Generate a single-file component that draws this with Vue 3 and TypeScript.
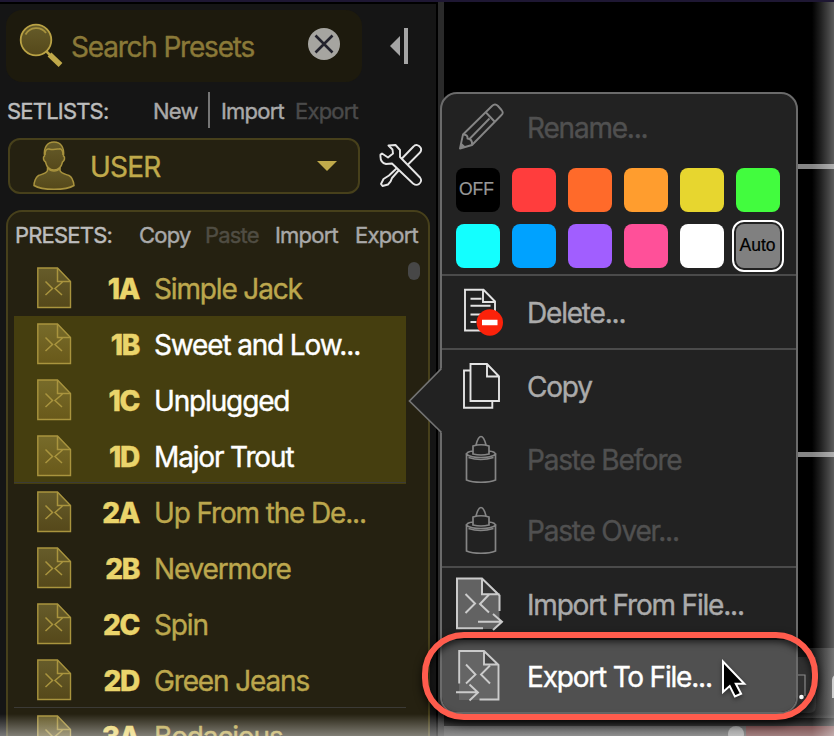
<script setup lang="ts">
interface Preset {
  slot: string
  name: string
  selected?: boolean
  lastInBank?: boolean
}

const presets: Preset[] = [
  { slot: '1A', name: 'Simple Jack' },
  { slot: '1B', name: 'Sweet and Low...', selected: true },
  { slot: '1C', name: 'Unplugged', selected: true },
  { slot: '1D', name: 'Major Trout', selected: true, lastInBank: true },
  { slot: '2A', name: 'Up From the De...' },
  { slot: '2B', name: 'Nevermore' },
  { slot: '2C', name: 'Spin' },
  { slot: '2D', name: 'Green Jeans', lastInBank: true },
  { slot: '3A', name: 'Bodacious' },
]

const swatches: string[] = [
  'off', 'red', 'vermilion', 'orange', 'yellow', 'green',
  'cyan', 'blue', 'purple', 'pink', 'white', 'auto',
]
const swatchLabels: Record<string, string> = { off: 'OFF', auto: 'Auto' }
</script>

<template>
  <div class="screen">
    <aside class="sidebar">
      <div class="search-row">
        <div class="search">
          <svg class="magnifier" width="48" height="48" viewBox="0 0 48 48">
            <defs>
              <linearGradient id="lens" x1="0" y1="0" x2="0" y2="1">
                <stop offset="0" stop-color="#665c2a" /><stop offset="1" stop-color="#55481a" />
              </linearGradient>
              <linearGradient id="lens-lit" x1="0" y1="0" x2="0" y2="1">
                <stop offset="0" stop-color="#776b2a" /><stop offset="1" stop-color="#69591a" />
              </linearGradient>
            </defs>
            <circle cx="18" cy="18" r="15.3" fill="url(#lens)" stroke="#b9a245" stroke-width="1.8" />
            <path d="M7.5 12.5C12 4.5 23 4 28 11" fill="none" stroke="#a8933e" stroke-width="1.8" />
            <path d="M28.5 29.500l4 4" stroke="#b9a245" stroke-width="2.500" />
            <path d="M31.500 32.500l11 10.500" stroke="#c0a94a" stroke-width="5.500" />
          </svg>
          <span class="search-text">Search Presets</span>
          <svg class="clear" width="32" height="32" viewBox="0 0 32 32">
            <circle cx="16" cy="16" r="16" fill="#a6a5a0" />
            <path d="M7.500 7.500l17 17M24.500 7.500l-17 17" stroke="#22222c" stroke-width="2.600" />
          </svg>
        </div>
        <svg class="collapse" width="18" height="36" viewBox="0 0 18 36">
          <path d="M10 8v20L0 18z" fill="#a5a5a5" /><path d="M14 0h4v36h-4z" fill="#a5a5a5" />
        </svg>
      </div>

      <div class="setlists">
        <span class="heading">SETLISTS:</span>
        <span class="new">New</span>
        <i class="bar"></i>
        <span class="import">Import</span>
        <span class="dim">Export</span>
      </div>

      <div class="user-row">
        <div class="select">
          <svg class="user-icon" width="42" height="50" viewBox="0 0 42 50">
            <g fill="url(#lens)" stroke="#a8923d" stroke-width="1.500">
              <path d="M14.500 24.500v5c-1 3-5 3.500-9 5-3 1.800-4.500 7-4.500 10 8 5 32 5 40 0-.5-4-2-8.500-5-10-4-1.500-8-2-9-5v-5z" />
              <path d="M11.500 15c-2 1-1 5 1 6 1 5 4.500 8 8.500 8s7.500-3 8.500-8c2-1 3-5 1-6 1-9-3-14-9.500-14S10.500 6 11.500 15z" />
              <path d="M12 14c0-4 1-6.500 4-6 5 1.500 8 0 11-.3 2 .5 3 3 3 6.300M15 27c3 4 9 4 12 0" fill="none" />
            </g>
          </svg>
          <span class="user-name">USER</span>
          <svg width="20" height="10" viewBox="0 0 20 10"><path d="M0 0h20L10 10z" fill="#c0aa4b" /></svg>
        </div>
        <svg class="tools" width="44" height="44" viewBox="0 0 44 44">
          <g fill="#151515" stroke="#e6e6e6" stroke-width="1.900" stroke-linejoin="round">
            <path d="M34.500 2.500c2-2.500 5.500-1.500 7 1s.5 4-1 5.500L27 22.500l-6-6z" />
            <path d="M18.500 23.500l2 2-7.500 8.500c-.5 2.500-2 4.500-4 6.500l-5.500 1.500-1.500-2 2.500-5 5.500-3.500z" />
            <path d="M9.500 1.500l7-.5 4.500 5v7l20 20.500c2 2.500 1 5-1 6.500s-4 1-6-.5L13 19.500l-6 .5c-4-1-6-4-5.500-9.500l1.500-1 6 4 5-4-.5-4z" />
          </g>
        </svg>
      </div>

      <section class="presets">
        <header class="presets-head">
          <span class="heading">PRESETS:</span>
          <span class="copy">Copy</span>
          <span class="paste dim">Paste</span>
          <span class="imp">Import</span>
          <span>Export</span>
        </header>
        <div class="list">
          <div
            v-for="p in presets"
            :key="p.slot"
            class="preset"
            :class="{ selected: p.selected, last: p.lastInBank }"
          >
            <svg class="doc" width="35" height="42" viewBox="0 0 35 42">
              <path class="doc-page" d="M.8 1H20.500L33.500 14.500V40.500H.8z" />
              <path d="M20.500 1v13.500H33.500M8.500 14.500l7 7-7 6.500M25.500 15l-7.500 6.500 7 6.500" fill="none" class="doc-line" />
            </svg>
            <b class="slot">{{ p.slot }}</b>
            <span class="name">{{ p.name }}</span>
          </div>
        </div>
        <i class="scroll-thumb"></i>
      </section>
    </aside>
    <div class="divider"></div>

    <main class="stage">
      <i class="wire wire-top"></i>
      <i class="wire wire-mid"></i>
      <div class="dock">
        <svg class="dock-icon" width="90" height="66" viewBox="0 0 90 66">
          <path d="M0 9h38v49q0 7-7 7H0z" fill="#303030" />
          <path d="M18 27h9v21" fill="none" stroke="#8b8b8b" stroke-width="1.200" />
          <circle cx="23.500" cy="49" r="2.300" fill="#fff" />
          <path d="M55 50V32q0-4 5-5" fill="none" stroke="#b5b5b5" stroke-width="2" />
        </svg>
      </div>
      <div class="meter"><i class="knob"></i></div>
    </main>
    <i class="haze-right"></i>
    <i class="haze-bottom"></i>

    <nav class="menu">
      <svg class="pointer" width="36" height="68" viewBox="0 0 36 68">
        <path d="M36 0L33 1.500 1.500 34 33 65.500 36 67z" fill="#222" />
        <path d="M33.500 1.500L1.500 34l32 31.500" fill="none" stroke="#737373" stroke-width="1.700" />
      </svg>
      <div class="item rename off">
        <svg width="48" height="48" viewBox="0 0 48 48">
          <g fill="none" stroke="#858585" stroke-width="1.900" stroke-linejoin="round">
            <path d="M4 45.500L7 31.500 36 3q3-3 6 0l3.500 4q2.500 3 0 5L16 42z" />
            <path d="M30 9.500l9 9.500M7 31.500q5 0 4.500 4 5 .5 4.500 6M13 36.500L33.500 15.500" />
          </g>
          <path d="M4 45.500l1-6 5 4.500z" fill="#858585" />
        </svg>
        <span>Rename...</span>
      </div>
      <div class="swatches">
        <span v-for="s in swatches" :key="s" class="swatch" :class="s">{{ swatchLabels[s] }}</span>
      </div>
      <hr />
      <div class="item delete">
        <svg width="48" height="50" viewBox="0 0 48 50">
          <g fill="none" stroke="#e3e3e3" stroke-width="1.900">
            <path d="M27 43.500H9V2.800H27.500L39 14.500V25M27 3v12H39" />
            <path d="M14.500 11.800h11M14.500 18.800h20M14.500 27.500h14M14.500 35h6" />
          </g>
          <circle cx="33.800" cy="35.500" r="13.200" fill="#fb220a" />
          <path d="M26 35.500h15.500" stroke="#fff" stroke-width="5.500" />
        </svg>
        <span>Delete...</span>
      </div>
      <hr />
      <div class="item copy-item">
        <svg width="48" height="50" viewBox="0 0 48 50">
          <g fill="none" stroke="#e3e3e3" stroke-width="1.900">
            <path d="M14.500 9.500H8v37.300H36.300V40" />
            <path d="M14.500 3H31L43 15.500V40H14.500zM31 3v12.500H43" />
          </g>
        </svg>
        <span>Copy</span>
      </div>
      <div v-for="label in ['Paste Before', 'Paste Over...']" :key="label" class="item off glue" :class="{ over: label.endsWith('...') }">
        <svg width="48" height="50" viewBox="0 0 48 50">
          <g fill="none" stroke="#858585" stroke-width="1.700">
            <path d="M10.500 20.500c6 4 23 4 29 0V46c-7 3-22 3-29 0z" />
            <path d="M10.500 20.500q0-3 7-3.500M39.500 20.500q0-3-7-3.500M17 12q8-2.500 16 0v8q-8 2-16 0zM20 11c1-4 2.500-8.500 5-8.500s4 4.500 5 8.500M12.500 23.500q12 4 25 0" />
          </g>
        </svg>
        <span>{{ label }}</span>
      </div>
      <hr />
      <div class="item import-item">
        <svg width="48" height="54" viewBox="0 0 48 54">
          <path d="M1 1.500H25.500L43.500 18.500V46L39 52H1z" fill="#626262" />
          <path d="M26 1.500V17H43z" fill="#333" />
          <g fill="none" stroke="#cbcbcb" stroke-width="2">
            <path d="M27 51.300H1V1.500H26L43.500 18.500V34M26 1.500V17.300H43.500" />
            <path d="M9.500 17l9.500 9.500L9.500 36M33 17.500L24 27l9 8.500M22 44.800H46M37 37l9 7.800L37 53" />
          </g>
        </svg>
        <span>Import From File...</span>
      </div>
      <div class="item export-item">
        <svg width="48" height="54" viewBox="0 0 48 54">
          <path d="M3 2H27.500L43 16V51H3z" fill="#656565" />
          <path d="M28 2V15.500H42z" fill="#444" />
          <g fill="none" stroke="#cbcbcb" stroke-width="1.900">
            <path d="M3.200 34.500V2H28L42.500 16V50.500H23.500M28 2V15.500H42.500" />
            <path d="M10 15.500l9.500 10L10 34.500M34 16.500l-9 9 9 9M0 43.300H22M13.500 35.500l8.500 8-8.500 8" />
          </g>
        </svg>
        <span>Export To File...</span>
      </div>
    </nav>

    <div class="callout"></div>
    <svg class="cursor" width="28" height="42" viewBox="0 0 28 42">
      <path d="M3 3.500V34l6.700-6 5.200 10.500 6.200-2.800-5.300-10h8.500z" fill="#000" stroke="#fff" stroke-width="2" />
    </svg>
  </div>
</template>

<style>
body { background: #000; overflow: hidden; }
</style>

<style scoped>
.screen {
  position: relative;
  display: flex;
  width: 834px;
  height: 736px;
  overflow: hidden;
  box-sizing: border-box;
  border-top: 2px solid #1e1733;
  background: #000;
  font-family: Inter, "Liberation Sans", sans-serif;
  font-size: 28px;
  white-space: nowrap;
  -webkit-text-stroke: 0.4px currentColor;
}
svg { display: block; flex: none; }
.sidebar {
  width: 436px;
  height: 732px;
  margin-top: 2px;
  flex: none;
  background: #151515;
}
.search-row { display: flex; align-items: center; padding: 6px 0 0 6px; }
.search {
  display: flex;
  align-items: center;
  box-sizing: border-box;
  width: 356px;
  height: 72px;
  padding: 0 22px 0 12px;
  border-radius: 16px;
  background: #1d1a0d;
  color: #8a7938;
}
.magnifier { margin: 0 5px 0 0; }
.search-text { flex: 1; margin-top: 2px; letter-spacing: -1.2px; }
.clear { margin-bottom: 4px; }
.collapse { margin-left: 28px; }
.setlists {
  display: flex;
  align-items: center;
  height: 36px;
  margin: 10px 0 0 7px;
  font-size: 22px;
  letter-spacing: -0.8px;
  color: #a9a9a9;
}
.setlists span { padding-top: 2px; }
.heading { color: #bdbdbd; letter-spacing: -0.8px; }
.setlists .heading { width: 146px; }
.setlists .new { width: 55px; }
.bar { width: 2px; height: 36px; margin-right: 11px; background: #757575; }
.setlists .import { width: 74px; }
.setlists .dim { color: #4a4a4a; }
.user-row { display: flex; align-items: center; margin: 10px 0 0 8px; }
.select {
  display: flex;
  align-items: center;
  box-sizing: border-box;
  width: 352px;
  height: 56px;
  padding: 0 21px 0 23px;
  border: 2px solid #47401b;
  border-radius: 12px;
  background: #252111;
  color: #c0aa4b;
}
.user-icon { margin-right: 15px; }
.user-name { flex: 1; padding-top: 2px; letter-spacing: -0.8px; }
.tools { margin-left: 19px; }
.presets {
  position: relative;
  box-sizing: border-box;
  width: 424px;
  height: 560px;
  margin: 16px 0 0 6px;
  border: 2px solid #47401b;
  border-radius: 16px;
  background: #252111;
}
.presets-head {
  display: flex;
  align-items: center;
  height: 46px;
  padding: 0 0 2px 7px;
  font-size: 22px;
  letter-spacing: -0.8px;
  color: #a9a9a9;
}
.presets-head .heading { width: 124px; }
.presets-head .copy { width: 66px; }
.presets-head .paste { width: 70px; color: #504d43; }
.presets-head .imp { width: 80px; }
.list { width: 392px; margin-left: 6px; }
.preset {
  display: flex;
  align-items: center;
  box-sizing: border-box;
  height: 56px;
  padding-left: 23px;
  color: #bca74d;
}
.preset.selected { background: #453e0f; color: #fff; }
.preset.last { box-shadow: inset 0 -1px #3b3a36; }
.preset.selected.last { box-shadow: inset 0 -1px #453e0f, inset 0 -2px #3c3b36; }
.slot { width: 67px; padding-top: 2px; text-align: right; font-weight: 800; color: #ead46b; letter-spacing: -1.3px; }
.name { margin-left: 15px; padding-top: 2px; letter-spacing: -1.15px; }
.doc-page { fill: url(#lens); stroke: #a9943e; stroke-width: 1.4; }
.selected .doc-page { fill: url(#lens-lit); }
.doc-line { stroke: #a9943e; stroke-width: 1.5; }
.scroll-thumb {
  position: absolute;
  top: 50px;
  right: 8px;
  width: 12px;
  height: 18px;
  border-radius: 6px;
  background: #474747;
}
.divider { width: 6px; margin-left: 2px; flex: none; background: #2a2a2a; }
.stage { position: relative; flex: 1; }
.wire { position: absolute; left: 340px; right: 0; height: 5px; background: #858585; }
.wire-top { top: 162px; }
.wire-mid { top: 450px; }
.dock { position: absolute; left: 334px; top: 646px; width: 56px; height: 70px; background: linear-gradient(90deg, #111, #262626); }
.dock-icon { width: 90px; }
.meter { position: absolute; left: 0; right: 0; bottom: 0; height: 10px; background: linear-gradient(90deg, #3c3c3c 302px, #5b2222 302px); }
.knob { position: absolute; left: 284px; top: 0; width: 16px; height: 16px; border-radius: 8px; background: #888; }
.haze-right { position: absolute; top: 0; right: 0; bottom: 0; width: 22px; background: linear-gradient(90deg, rgba(255,255,255,0), rgba(255,255,255,.13) 40%, rgba(255,255,255,.36)); }
.haze-bottom { position: absolute; left: 0; right: 0; bottom: 0; height: 22px; background: linear-gradient(180deg, rgba(255,255,255,0), rgba(255,255,255,.42)); }
.menu {
  position: absolute;
  left: 440px;
  top: 90px;
  box-sizing: border-box;
  width: 358px;
  height: 622px;
  border: 2px solid #6b6b6b;
  border-radius: 17px;
  background: #222;
  color: #ababab;
}
.pointer { position: absolute; left: -34px; top: 273px; }
.menu hr { height: 2px; margin: 0; border: 0; background: #4b4b4b; }
.item {
  display: flex;
  align-items: center;
  gap: 23px;
  box-sizing: border-box;
  height: 72px;
  padding-left: 14px;
  letter-spacing: -1.2px;
}
.item span { padding-top: 2px; }
.item.off { color: #505050; }
.rename { height: 74px; padding-bottom: 9px; }
.item.glue { padding-bottom: 3px; }
.swatches {
  display: grid;
  grid-template-columns: repeat(6, 44px);
  gap: 12px;
  height: 100px;
  padding: 0 0 6px 14px;
}
.swatch {
  display: flex;
  align-items: center;
  justify-content: center;
  box-sizing: border-box;
  width: 44px;
  height: 44px;
  border-radius: 8px;
  font: 17.5px "Liberation Sans", sans-serif;
  -webkit-text-stroke-width: 0.2px;
}
.off.swatch { padding: 0 3px 2px 0; background: #000; color: #999; }
.red { background: #ff3d3d; }
.vermilion { background: #ff6a2a; }
.orange { background: #ff9d2e; }
.yellow { background: #e7d62f; }
.green { background: #42fc3e; }
.cyan { background: #13ffff; }
.blue { background: #00a2ff; }
.purple { background: #a15eff; }
.pink { background: #ff5099; }
.white { background: #fff; }
.auto.swatch { padding: 0 1px 2px 0; background: #808080; color: #000; outline: 2px solid #fff; outline-offset: 2px; }
.copy-item { height: 74px; padding-bottom: 2px; }
.over { height: 70px; }
.export-item { border-radius: 0 0 15px 15px; background: #505050; color: #fff; }
.callout {
  position: absolute;
  left: 422px;
  top: 630px;
  box-sizing: border-box;
  width: 396px;
  height: 88px;
  border: 6px solid #ff5c4d;
  border-radius: 42px;
  box-shadow: 0 4px 8px rgba(0,0,0,.75), inset 0 4px 7px rgba(0,0,0,.65);
}
.cursor { position: absolute; left: 720px; top: 656px; filter: drop-shadow(0 2px 2px rgba(0,0,0,.4)); }
</style>
